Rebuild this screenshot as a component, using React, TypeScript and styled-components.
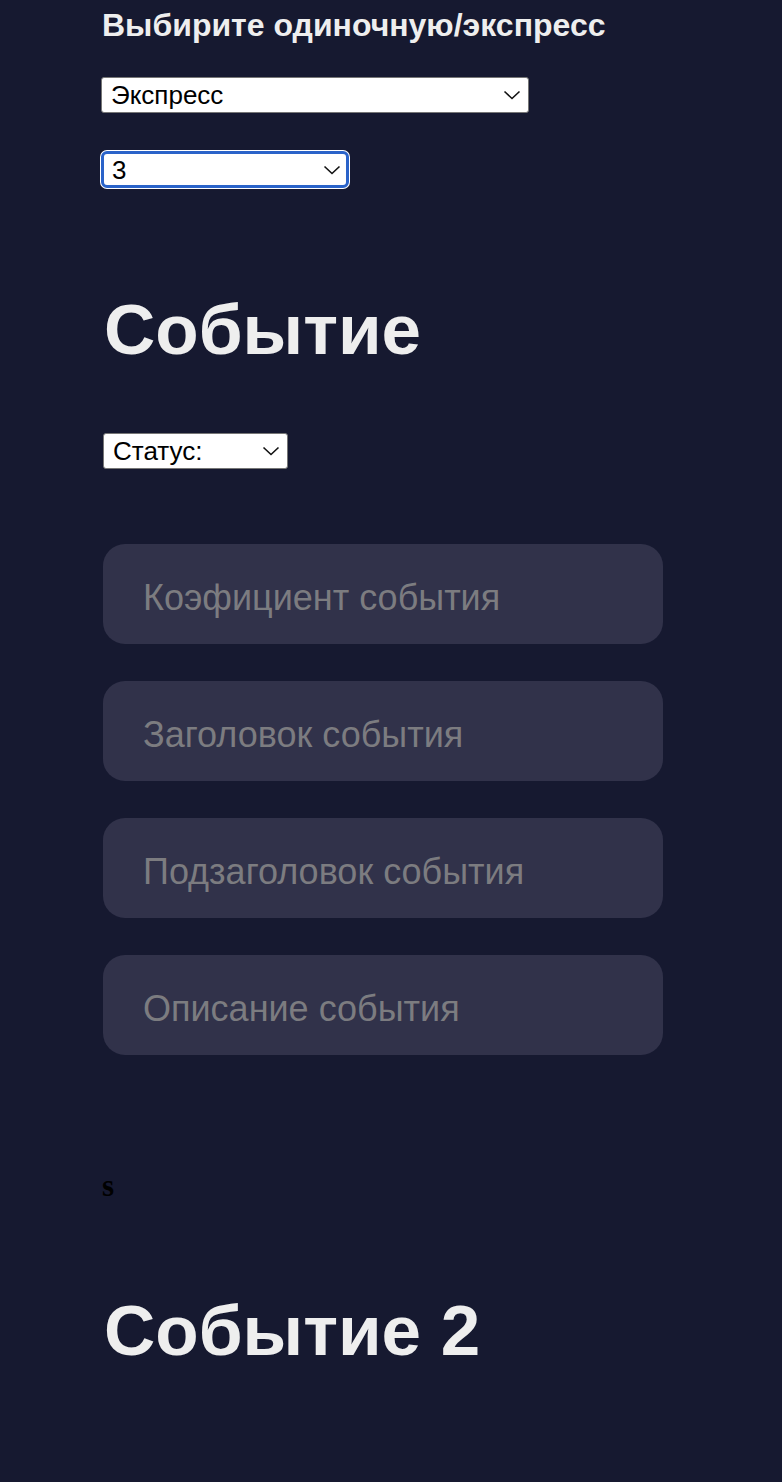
import styled, { createGlobalStyle, css } from 'styled-components';

const GlobalStyle = createGlobalStyle`
  html, body {
    margin: 0;
    padding: 0;
    background: #161930;
  }

  body {
    font-family: "Liberation Sans", Arial, sans-serif;
    min-height: 1482px;
  }
`;

const Page = styled.div`
  padding: 7px 0 120px 102px;
  min-height: 1482px;
  box-sizing: border-box;
`;

const ModeTitle = styled.h3`
  margin: 0;
  font-size: 32px;
  line-height: 36px;
  font-weight: 700;
  color: #eeeeee;
`;

const SelectWrap = styled.div<{ $width: number; $top: number; $left?: number }>`
  position: relative;
  width: ${p => p.$width}px;
  margin-top: ${p => p.$top}px;
  margin-left: ${p => p.$left ?? 0}px;
`;

const Select = styled.select<{ $focused?: boolean }>`
  appearance: none;
  -webkit-appearance: none;
  display: block;
  width: 100%;
  height: 36px;
  box-sizing: border-box;
  padding: 0 36px 0 9px;
  margin: 0;
  background: #ffffff;
  color: #000000;
  font-family: "Liberation Sans", Arial, sans-serif;
  font-size: 26px;
  border: 1.5px solid #767676;
  border-radius: 3px;
  outline: none;

  ${p =>
    p.$focused &&
    css`
      height: 37px;
      padding-left: 8px;
      border: 3px solid #2a63c9;
      border-radius: 6px;
      box-shadow: 0 0 0 1px #ffffff;
    `}
`;

const Chevron = styled.svg`
  position: absolute;
  right: 8px;
  top: 50%;
  width: 18px;
  height: 10px;
  margin-top: -5px;
  pointer-events: none;
`;

const EventTitle = styled.h1<{ $top: number }>`
  margin: ${p => p.$top}px 0 0 2px;
  font-size: 71px;
  line-height: 80px;
  font-weight: 700;
  color: #eeeeee;
`;

const Fields = styled.div`
  display: flex;
  flex-direction: column;
  gap: 37px;
  margin: 75px 0 0 1px;
  width: 560px;
`;

const Field = styled.input`
  display: block;
  width: 560px;
  height: 100px;
  box-sizing: border-box;
  padding: 8px 40px 0;
  border: none;
  border-radius: 22px;
  background: #31324a;
  color: #dddddd;
  font-family: "Liberation Sans", Arial, sans-serif;
  font-size: 36px;
  outline: none;

  &::placeholder {
    color: #7c7c80;
  }
`;

const Stray = styled.b`
  display: block;
  margin-top: 114px;
  font-family: "Liberation Serif", "Times New Roman", serif;
  font-size: 31px;
  line-height: 34px;
  color: #000000;
`;

const Arrow = () => (
  <Chevron viewBox="0 0 18 10">
    <path d="M1.5 1.5 L9 8.5 L16.5 1.5" fill="none" stroke="#111" strokeWidth="1.6" />
  </Chevron>
);

export default function App() {
  return (
    <>
      <GlobalStyle />
      <Page>
        <ModeTitle>Выбирите одиночную/экспресс</ModeTitle>

        <SelectWrap $width={428} $top={34} $left={-1}>
          <Select defaultValue="express">
            <option value="single">Одиночная</option>
            <option value="express">Экспресс</option>
          </Select>
          <Arrow />
        </SelectWrap>

        <SelectWrap $width={248} $top={38} $left={-1}>
          <Select $focused defaultValue="3">
            <option value="2">2</option>
            <option value="3">3</option>
            <option value="4">4</option>
          </Select>
          <Arrow />
        </SelectWrap>

        <EventTitle $top={102}>Событие</EventTitle>

        <SelectWrap $width={185} $top={63} $left={1}>
          <Select defaultValue="">
            <option value="">Статус:</option>
            <option value="win">Выигрыш</option>
            <option value="lose">Проигрыш</option>
          </Select>
          <Arrow />
        </SelectWrap>

        <Fields>
          <Field placeholder="Коэфициент события" />
          <Field placeholder="Заголовок события" />
          <Field placeholder="Подзаголовок события" />
          <Field placeholder="Описание события" />
        </Fields>

        <Stray>s</Stray>

        <EventTitle $top={88}>Событие 2</EventTitle>
      </Page>
    </>
  );
}
